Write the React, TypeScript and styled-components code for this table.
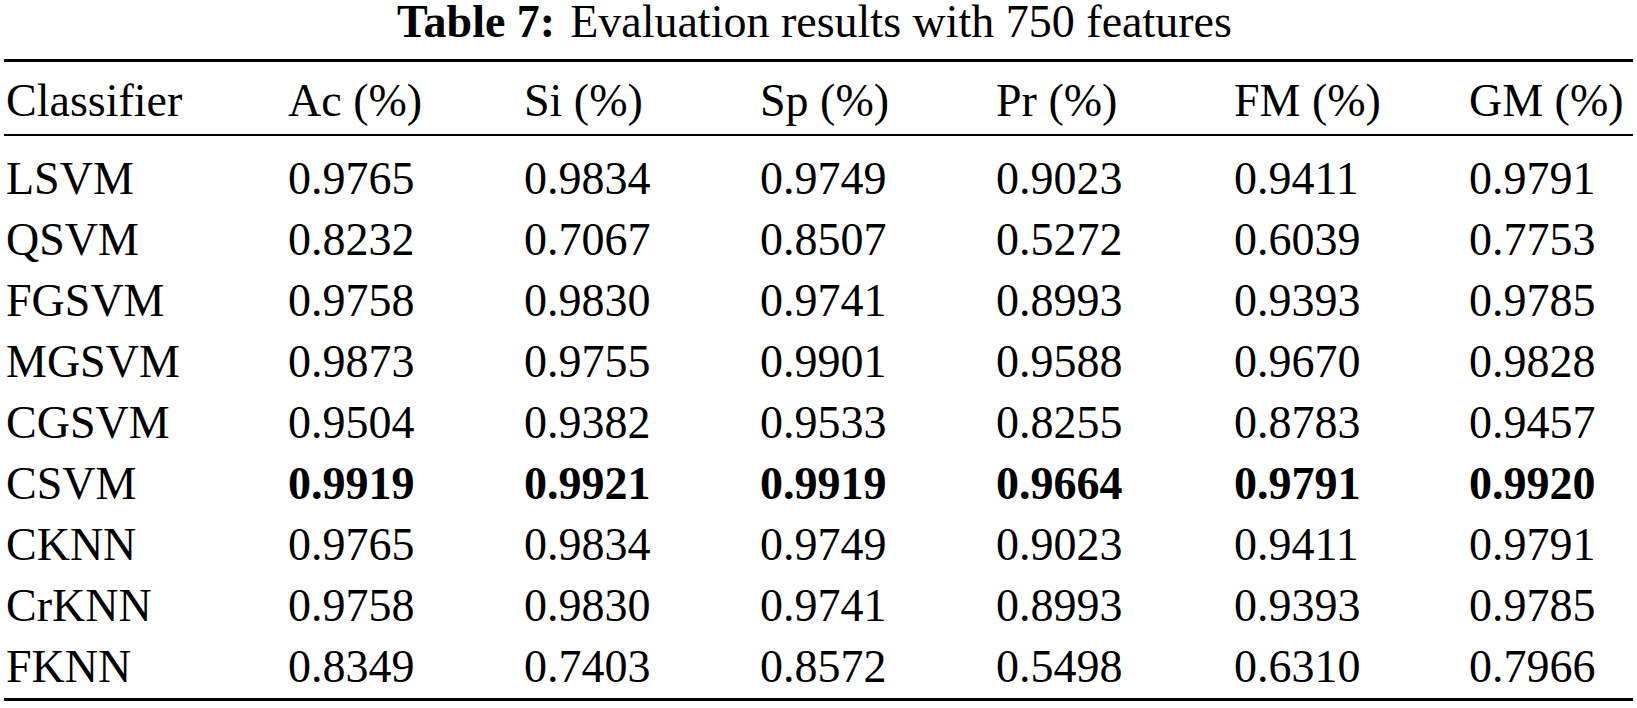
import styled, { createGlobalStyle } from "styled-components";

const GlobalStyle = createGlobalStyle`
  html, body {
    margin: 0;
    padding: 0;
    background: #ffffff;
  }
  #root, #root * {
    font-family: "Liberation Serif", "Times New Roman", serif !important;
  }
`;

const Page = styled.div`
  width: 1637px;
  padding: 0 4px;
  box-sizing: border-box;
  color: #000000;
`;

const Caption = styled.div`
  font-family: "Liberation Serif", serif;
  font-size: 46px;
  line-height: 46px;
  text-align: center;
  margin-top: -1px;
  margin-bottom: 14px;
  padding-right: 8px;
`;

const CaptionLabel = styled.span`
  font-weight: 700;
  margin-right: 15px;
`;

const Table = styled.div`
  border-top: 3px solid #000;
  border-bottom: 3px solid #000;
`;

const Head = styled.div`
  padding: 8px 0 3px;
  border-bottom: 2px solid #000;
`;

const Body = styled.div`
  padding: 12px 0 1px;
`;

const Row = styled.div`
  display: grid;
  grid-template-columns: 282px 236px 236px 236px 238px 235px 1fr;
  padding-left: 2px;
  font-family: "Liberation Serif", serif;
  font-size: 46px;
  line-height: 61px;
`;

const Cell = styled.span<{ $bold?: boolean }>`
  font-weight: ${({ $bold }) => ($bold ? 700 : 400)};
`;

const headers = ["Classifier", "Ac (%)", "Si (%)", "Sp (%)", "Pr (%)", "FM (%)", "GM (%)"];

const rows: { name: string; values: string[]; best?: boolean }[] = [
  { name: "LSVM", values: ["0.9765", "0.9834", "0.9749", "0.9023", "0.9411", "0.9791"] },
  { name: "QSVM", values: ["0.8232", "0.7067", "0.8507", "0.5272", "0.6039", "0.7753"] },
  { name: "FGSVM", values: ["0.9758", "0.9830", "0.9741", "0.8993", "0.9393", "0.9785"] },
  { name: "MGSVM", values: ["0.9873", "0.9755", "0.9901", "0.9588", "0.9670", "0.9828"] },
  { name: "CGSVM", values: ["0.9504", "0.9382", "0.9533", "0.8255", "0.8783", "0.9457"] },
  { name: "CSVM", values: ["0.9919", "0.9921", "0.9919", "0.9664", "0.9791", "0.9920"], best: true },
  { name: "CKNN", values: ["0.9765", "0.9834", "0.9749", "0.9023", "0.9411", "0.9791"] },
  { name: "CrKNN", values: ["0.9758", "0.9830", "0.9741", "0.8993", "0.9393", "0.9785"] },
  { name: "FKNN", values: ["0.8349", "0.7403", "0.8572", "0.5498", "0.6310", "0.7966"] },
];

export default function App() {
  return (
    <Page>
      <GlobalStyle />
      <Caption>
        <CaptionLabel>Table 7:</CaptionLabel>Evaluation results with 750 features
      </Caption>
      <Table>
        <Head>
          <Row>
            {headers.map((h) => (
              <Cell key={h}>{h}</Cell>
            ))}
          </Row>
        </Head>
        <Body>
          {rows.map((r) => (
            <Row key={r.name}>
              <Cell>{r.name}</Cell>
              {r.values.map((v, i) => (
                <Cell key={i} $bold={r.best}>
                  {v}
                </Cell>
              ))}
            </Row>
          ))}
        </Body>
      </Table>
    </Page>
  );
}
